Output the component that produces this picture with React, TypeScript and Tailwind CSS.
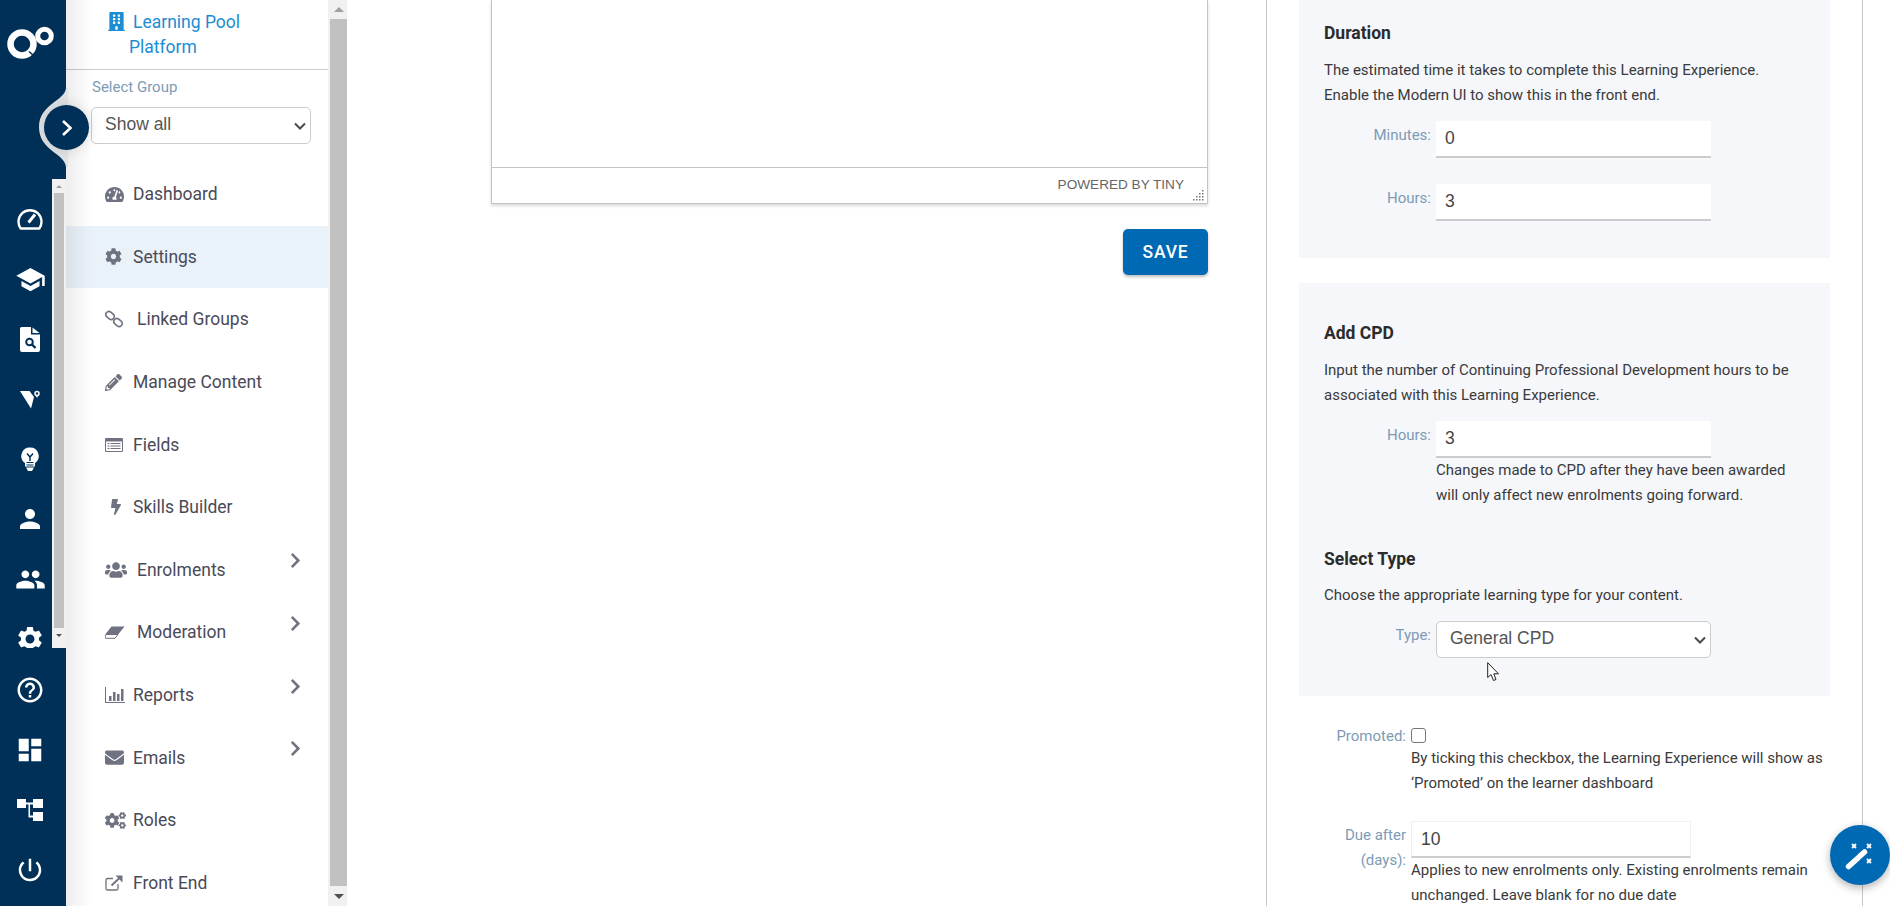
import React from "react";
import { FaBuilding, FaTachometerAlt, FaCog, FaPencilAlt, FaBolt, FaUsers, FaEnvelope, FaCogs, FaChevronRight } from "react-icons/fa";
import { MdSchool, MdPerson, MdPeople, MdSettings, MdHelpOutline, MdDashboard, MdPowerSettingsNew } from "react-icons/md";

const W = "flex h-[60px] w-[60px] shrink-0 items-center justify-center text-white";

function Logo() {
  return (
    <svg width="48" height="34" viewBox="0 0 48 34" fill="none" stroke="white">
      <circle cx="15" cy="18" r="11.500" strokeWidth="6.500" />
      <path d="M22 25.500 L27 30" stroke="#003057" strokeWidth="1.500" />
      <circle cx="37.500" cy="10" r="6.800" strokeWidth="5" />
    </svg>
  );
}
function Gauge() {
  return (
    <svg width="26" height="22" viewBox="0 0 26 22" fill="none" stroke="white" strokeWidth="2.400">
      <path d="M3.700 20.500 A11.500 11.500 0 1 1 22.300 20.500 Z" strokeLinejoin="round" />
      <path d="M11.500 14.500 L18 6.500" strokeWidth="3" />
    </svg>
  );
}
function DocSearch() {
  return (
    <svg width="20" height="25" viewBox="0 0 20 25">
      <path d="M1.500 0 H11 V7.500 H20 V23 Q20 25 18 25 H2 Q0 25 0 23 V1.500 Q0 0 1.500 0 Z" fill="white" />
      <path d="M12.500 0.500 L19.500 6 H12.500 Z" fill="white" />
      <circle cx="9.500" cy="15" r="3.300" fill="none" stroke="#003057" strokeWidth="2" />
      <path d="M12 17.500 L15.500 21" stroke="#003057" strokeWidth="2.400" />
    </svg>
  );
}
function VPin() {
  return (
    <svg width="20" height="19" viewBox="0 0 20 19" fill="white">
      <path d="M0 1 H9.500 L14 7 L11 18.500 Z" />
      <circle cx="17" cy="3.500" r="2" fill="none" stroke="white" strokeWidth="1.500" />
      <path d="M15.500 5 L17 8 L18.500 5 Z" />
    </svg>
  );
}
function Bulb() {
  return (
    <svg width="18" height="25" viewBox="0 0 18 25">
      <path d="M9 0.500 A8.500 8.500 0 0 1 14 16 V19.500 H4 V16 A8.500 8.500 0 0 1 9 0.500 Z" fill="white" />
      <path d="M6 6.500 L9 10 L12 6.500 M9 10 V14" fill="none" stroke="#003057" strokeWidth="1.500" />
      <path d="M5.500 15.500 H12.500 M5.500 18 H12.500" fill="none" stroke="#003057" strokeWidth="1.200" />
      <path d="M5 20.500 H13 L11 24 H7 Z" fill="white" />
    </svg>
  );
}
function Tree() {
  return (
    <svg width="26" height="24" viewBox="0 0 26 24" fill="white">
      <rect x="0" y="1" width="9" height="9" />
      <rect x="16" y="1" width="10" height="9" />
      <rect x="16" y="14" width="10" height="9" />
      <path d="M9 4.500 H16 V6.500 H13 V17.500 H16 V19.500 H11.500 V6.500 H9 Z" />
    </svg>
  );
}
function Eraser() {
  return (
    <svg width="20" height="13" viewBox="0 0 20 13">
      <path d="M6.500 0.500 H19.500 L13.500 8 H0.500 Z" fill="#6f7280" />
      <path d="M0.800 8.500 H13 L10 12.300 H0.500 Q-0.300 11 0.800 8.500 Z" fill="white" stroke="#6f7280" strokeWidth="1" />
    </svg>
  );
}
function Bars() {
  return (
    <svg width="20" height="16" viewBox="0 0 20 16" fill="#6f7280">
      <rect x="0" y="0" width="1" height="16" />
      <rect x="0" y="15" width="20" height="1" />
      <rect x="4" y="9" width="2.500" height="5" />
      <rect x="8" y="5" width="2.500" height="9" />
      <rect x="12" y="7" width="2.500" height="7" />
      <rect x="16" y="2" width="2.500" height="12" />
    </svg>
  );
}
function Chain() {
  return (
    <svg width="18" height="18" viewBox="0 0 18 18" fill="none" stroke="#6f7280" strokeWidth="1.600">
      <rect x="0.500" y="2.500" width="9" height="6" rx="3" transform="rotate(40 5 5.500)" />
      <rect x="8.500" y="9.500" width="9" height="6" rx="3" transform="rotate(40 13 12.500)" />
    </svg>
  );
}
function FieldsIcon() {
  return (
    <svg width="18" height="14" viewBox="0 0 18 14" fill="#6f7280">
      <path d="M1 0 H17 Q18 0 18 1 V13 Q18 14 17 14 H1 Q0 14 0 13 V1 Q0 0 1 0 Z M1 3.500 V13 H17 V3.500 Z" fillRule="evenodd" />
      <rect x="2.500" y="5" width="2" height="1" /><rect x="5.500" y="5" width="10" height="1" />
      <rect x="2.500" y="7.500" width="2" height="1" /><rect x="5.500" y="7.500" width="10" height="1" />
      <rect x="2.500" y="10" width="2" height="1" /><rect x="5.500" y="10" width="10" height="1" />
    </svg>
  );
}
function Ext() {
  return (
    <svg width="18" height="16" viewBox="0 0 18 16" fill="none" stroke="#6f7280">
      <path d="M13 9 V13.500 Q13 15 11.500 15 H2.500 Q1 15 1 13.500 V5 Q1 3.500 2.500 3.500 H8" strokeWidth="1.300" />
      <path d="M6.500 10.500 L15 2.500" strokeWidth="2" />
      <path d="M10.500 0.500 H17.500 V7.500 Z" fill="#6f7280" stroke="none" />
    </svg>
  );
}
function Wand() {
  return (
    <svg width="30" height="30" viewBox="0 0 30 30" fill="none" stroke="white">
      <path d="M3.500 26.500 L13 18" strokeWidth="5.500" strokeLinecap="round" />
      <path d="M15 16 L19.500 12" strokeWidth="5.500" strokeLinecap="round" />
      <path d="M7 4 L11 8 M11 4 L7 8 M22 4 L26 8 M26 4 L22 8 M22 19 L26 23 M26 19 L22 23" strokeWidth="1.800" />
    </svg>
  );
}

function Arrow({ down }: { down?: boolean }) {
  return (
    <div className="flex h-[14px] w-full shrink-0 items-center justify-center">
      <div className={down ? "h-0 w-0 border-x-[3px] border-t-[3px] border-x-transparent border-t-[#505050]" : "h-0 w-0 border-x-[3px] border-b-[3px] border-x-transparent border-b-[#a0a0a0]"} />
    </div>
  );
}

function Select({ value, className = "" }: { value: string; className?: string }) {
  return (
    <div className={"relative shrink-0 " + className}>
      <select defaultValue={value} className="block h-[37px] w-full appearance-none rounded-[5px] border border-[#ccc] bg-white pb-[2px] pl-[13px] font-['Liberation_Sans',sans-serif] text-[17.5px] text-[#555]">
        <option value={value}>{value}</option>
      </select>
      <svg className="pointer-events-none absolute top-[15px] right-[5px]" width="12" height="8" viewBox="0 0 12 8" fill="none" stroke="#4a4a4a" strokeWidth="2">
        <path d="M1 1.500 L6 6.500 L11 1.500" />
      </svg>
    </div>
  );
}

const menu: { label: string; icon: React.ReactNode; slot: string; chevron?: boolean; active?: boolean }[] = [
  { label: "Dashboard", icon: <FaTachometerAlt size={19} />, slot: "w-[28px]" },
  { label: "Settings", icon: <FaCog size={17} />, slot: "w-[28px]", active: true },
  { label: "Linked Groups", icon: <Chain />, slot: "w-[32px]" },
  { label: "Manage Content", icon: <FaPencilAlt size={17} />, slot: "w-[28px]" },
  { label: "Fields", icon: <FieldsIcon />, slot: "w-[28px]" },
  { label: "Skills Builder", icon: <FaBolt size={16} className="ml-[3px]" />, slot: "w-[28px]" },
  { label: "Enrolments", icon: <FaUsers size={22} />, slot: "w-[32px]", chevron: true },
  { label: "Moderation", icon: <Eraser />, slot: "w-[32px]", chevron: true },
  { label: "Reports", icon: <Bars />, slot: "w-[28px]", chevron: true },
  { label: "Emails", icon: <FaEnvelope size={19} />, slot: "w-[28px]", chevron: true },
  { label: "Roles", icon: <FaCogs size={21} />, slot: "w-[28px]" },
  { label: "Front End", icon: <Ext />, slot: "w-[28px]" },
];

function Body({ children, className = "" }: { children: React.ReactNode; className?: string }) {
  return <p className={"text-[15px] leading-[25px] text-[#3a3a3a] " + className}>{children}</p>;
}
function Heading({ children, className = "" }: { children: React.ReactNode; className?: string }) {
  return <h3 className={"text-[17.5px] font-bold leading-[25px] text-[#2b2b2b] " + className}>{children}</h3>;
}
function Label({ children, className = "" }: { children: React.ReactNode; className?: string }) {
  return <label className={"shrink-0 pt-[2px] pr-[5px] text-right text-[15px] leading-[25px] text-[#7d9bb5] " + className}>{children}</label>;
}
function Field({ value, className = "" }: { value: string; className?: string }) {
  return (
    <input
      readOnly
      value={value}
      className={"block h-[37px] border-b-2 border-b-[#ccc] bg-white pl-[9px] font-['Liberation_Sans',sans-serif] text-[17.5px] text-[#444] outline-none " + className}
    />
  );
}

export default function App() {
  return (
    <div className="relative flex h-[906px] w-[1890px] overflow-hidden bg-white font-['Roboto',sans-serif]">
      {/* icon rail */}
      <aside className="relative z-20 flex h-full w-[66px] shrink-0 flex-col bg-[#003057]">
        <div className="h-[179px] shrink-0 pt-[26px] pl-[7px]">
          <Logo />
        </div>
        <div className="flex h-[469px] w-[66px] shrink-0 overflow-hidden">
          <div className="w-[52px] overflow-hidden pt-[10px]">
            <div className="flex w-[60px] flex-col">
              <div className={W}><Gauge /></div>
              <div className={W}><MdSchool size={31} /></div>
              <div className={W}><DocSearch /></div>
              <div className={W}><VPin /></div>
              <div className={W}><Bulb /></div>
              <div className={W}><MdPerson size={30} /></div>
              <div className={W}><MdPeople size={31} /></div>
              <div className={W}><MdSettings size={30} /></div>
            </div>
          </div>
          <div className="flex w-[14px] flex-col bg-[#f1f1f1]">
            <Arrow />
            <div className="mx-auto min-h-0 w-[10px] flex-1 bg-[#c1c1c1]" />
            <div className="h-[20px] shrink-0"><Arrow down /></div>
          </div>
        </div>
        <div className="flex flex-col pt-[12px]">
          <div className={W}><MdHelpOutline size={30} /></div>
          <div className={W}><MdDashboard size={30} /></div>
          <div className={W}><Tree /></div>
          <div className={W}><MdPowerSettingsNew size={30} /></div>
        </div>
        {/* collapse toggle sitting over the rail edge */}
        <svg className="absolute top-[85px] left-[36px]" width="32" height="85" viewBox="0 0 32 85">
          <path d="M30 3 C29 16 3 19 3 42 C3 66 29 68 30 82 L32 82 L32 3 Z" fill="#e0e3e6" />
        </svg>
        <button className="absolute top-[105px] left-[44px] flex h-[45px] w-[45px] items-center justify-center rounded-full bg-[#003057] text-white shadow-[0_0_14px_rgba(0,0,0,0.14)]">
          <svg width="12" height="18" viewBox="0 0 12 18" fill="none" stroke="white" strokeWidth="2.600">
            <path d="M2 2 L9.500 9 L2 16" />
          </svg>
        </button>
      </aside>

      {/* group sidebar */}
      <nav className="relative flex h-full w-[262px] shrink-0 flex-col bg-white">
        <div className="pointer-events-none absolute inset-y-0 left-0 z-10 w-[26px] bg-gradient-to-r from-[#00000012] to-transparent" />
        <div className="h-[70px] shrink-0 border-b border-[#ccc] pt-[10px] pl-[63px] indent-[-22px] text-[17.5px] leading-[25px] text-[#1b8dd2]">
          <FaBuilding className="mr-[7px] inline-block align-[-3px]" size={19} />
          Learning Pool<br />
          <span>Platform</span>
        </div>
        <div className="shrink-0 pt-[5px] pl-[26px] text-[15px] leading-[25px] text-[#7d9bb5]">Select Group</div>
        <div className="shrink-0 pt-[7px] pl-[25px]">
          <Select value="Show all" className="w-[220px]" />
        </div>
        <ul className="mt-[19px] flex flex-col">
          {menu.map((m) => (
            <li
              key={m.label}
              className={"flex h-[62.6px] shrink-0 items-center pr-[24px] pl-[39px] text-[17.5px] text-[#4a4a58] " + (m.active ? "bg-[#eaf2f9]" : "")}
            >
              <span className={"flex shrink-0 items-center text-[#6f7280] " + m.slot}>{m.icon}</span>
              <span>{m.label}</span>
              {m.chevron && <FaChevronRight size={17} className="mb-[18px] ml-auto text-[#6f7280]" />}
            </li>
          ))}
        </ul>
      </nav>

      {/* page scrollbar */}
      <div className="flex h-full w-[19px] shrink-0 flex-col bg-[#f1f1f1]">
        <div className="flex h-[19px] shrink-0 items-center justify-center pl-[2px]">
          <div className="h-0 w-0 border-x-[5px] border-b-[5px] border-x-transparent border-b-[#a0a0a0]" />
        </div>
        <div className="ml-[2px] min-h-0 flex-1 bg-[#c1c1c1]" />
        <div className="flex h-[20px] shrink-0 items-center justify-center pl-[2px]">
          <div className="h-0 w-0 border-x-[5px] border-t-[5px] border-x-transparent border-t-[#505050]" />
        </div>
      </div>

      {/* editor column */}
      <main className="w-[919px] shrink-0 pr-[58px] pl-[144px]">
        <div className="flex h-[204px] flex-col border border-t-0 border-[#c4c4c4] shadow-[0_2px_3px_rgba(0,0,0,0.15)]">
          <div className="flex-1" />
          <div className="relative flex h-[36px] shrink-0 items-center justify-end border-t border-[#c4c4c4] pr-[23px] font-['Liberation_Sans',sans-serif] text-[13.6px] text-[#666]">
            <span className="mt-[-1px]">POWERED BY TINY</span>
            <svg className="absolute right-[3px] bottom-[2px]" width="12" height="12" viewBox="0 0 12 12" fill="#777">
              <rect x="10" y="1" width="1.500" height="1.500" />
              <rect x="7" y="4" width="1.500" height="1.500" /><rect x="10" y="4" width="1.500" height="1.500" />
              <rect x="4" y="7" width="1.500" height="1.500" /><rect x="7" y="7" width="1.500" height="1.500" /><rect x="10" y="7" width="1.500" height="1.500" />
              <rect x="1" y="10" width="1.500" height="1.500" /><rect x="4" y="10" width="1.500" height="1.500" /><rect x="7" y="10" width="1.500" height="1.500" /><rect x="10" y="10" width="1.500" height="1.500" />
            </svg>
          </div>
        </div>
        <div className="mt-[25px] flex justify-end">
          <button className="h-[46px] w-[85px] rounded-[5px] bg-[#0069b4] text-[17.5px] font-medium tracking-[0.8px] text-white shadow-[0_2px_3px_rgba(0,0,0,0.25)]">SAVE</button>
        </div>
      </main>

      {/* settings column */}
      <section className="h-full w-[597px] shrink-0 overflow-hidden border-x border-[#c8c8c8] pl-[32px]">
        <div className="h-[258px] w-[531px] bg-[#f5f7fb] pt-[21px] pl-[25px]">
          <Heading>Duration</Heading>
          <Body className="mt-[12px]">The estimated time it takes to complete this Learning Experience.<br />Enable the Modern UI to show this in the front end.</Body>
          <div className="mt-[13px] flex">
            <Label className="w-[112px]">Minutes:</Label>
            <Field value="0" className="w-[275px]" />
          </div>
          <div className="mt-[26px] flex">
            <Label className="w-[112px]">Hours:</Label>
            <Field value="3" className="w-[275px]" />
          </div>
        </div>

        <div className="mt-[25px] h-[413px] w-[531px] bg-[#f5f7fb] pt-[38px] pl-[25px]">
          <Heading>Add CPD</Heading>
          <Body className="mt-[12px]">Input the number of Continuing Professional Development hours to be<br />associated with this Learning Experience.</Body>
          <div className="mt-[13px] flex">
            <Label className="w-[112px]">Hours:</Label>
            <div>
              <Field value="3" className="w-[275px]" />
              <Body>Changes made to CPD after they have been awarded<br />will only affect new enrolments going forward.</Body>
            </div>
          </div>
          <Heading className="mt-[39px]">Select Type</Heading>
          <Body className="mt-[11px]">Choose the appropriate learning type for your content.</Body>
          <div className="mt-[13px] flex">
            <Label className="w-[112px]">Type:</Label>
            <Select value="General CPD" className="w-[275px]" />
          </div>
        </div>

        <div className="mt-[26px] flex">
          <Label className="w-[112px]">Promoted:</Label>
          <div className="w-[420px] pt-[6px]">
            <input type="checkbox" readOnly className="block h-[15px] w-[15px] appearance-none rounded-[3px] border border-[#777] bg-white" />
            <Body className="mt-[3px]">By ticking this checkbox, the Learning Experience will show as<br />‘Promoted’ on the learner dashboard</Body>
          </div>
        </div>
        <div className="mt-[25px] flex">
          <Label className="w-[112px]">Due after<br />(days):</Label>
          <div className="w-[420px]">
            <Field value="10" className="w-[280px] border-x border-t border-x-[#f0f0f0] border-t-[#f0f0f0]" />
            <Body>Applies to new enrolments only. Existing enrolments remain<br />unchanged. Leave blank for no due date</Body>
          </div>
        </div>
      </section>

      {/* floating action + mouse pointer */}
      <button className="absolute top-[825px] right-0 z-30 flex h-[60px] w-[60px] items-center justify-center rounded-full bg-[#0069b4] text-white shadow-[0_3px_8px_rgba(0,0,0,0.3)]">
        <Wand />
      </button>
      <svg className="pointer-events-none absolute top-[662px] left-[1487px] z-30" width="13" height="20" viewBox="0 0 13 20">
        <path d="M0.700 0.700 V15.500 L4 12.500 L6.500 18.500 L9 17.500 L6.800 11.800 H11.500 Z" fill="white" stroke="#222" strokeWidth="1" />
      </svg>
    </div>
  );
}
